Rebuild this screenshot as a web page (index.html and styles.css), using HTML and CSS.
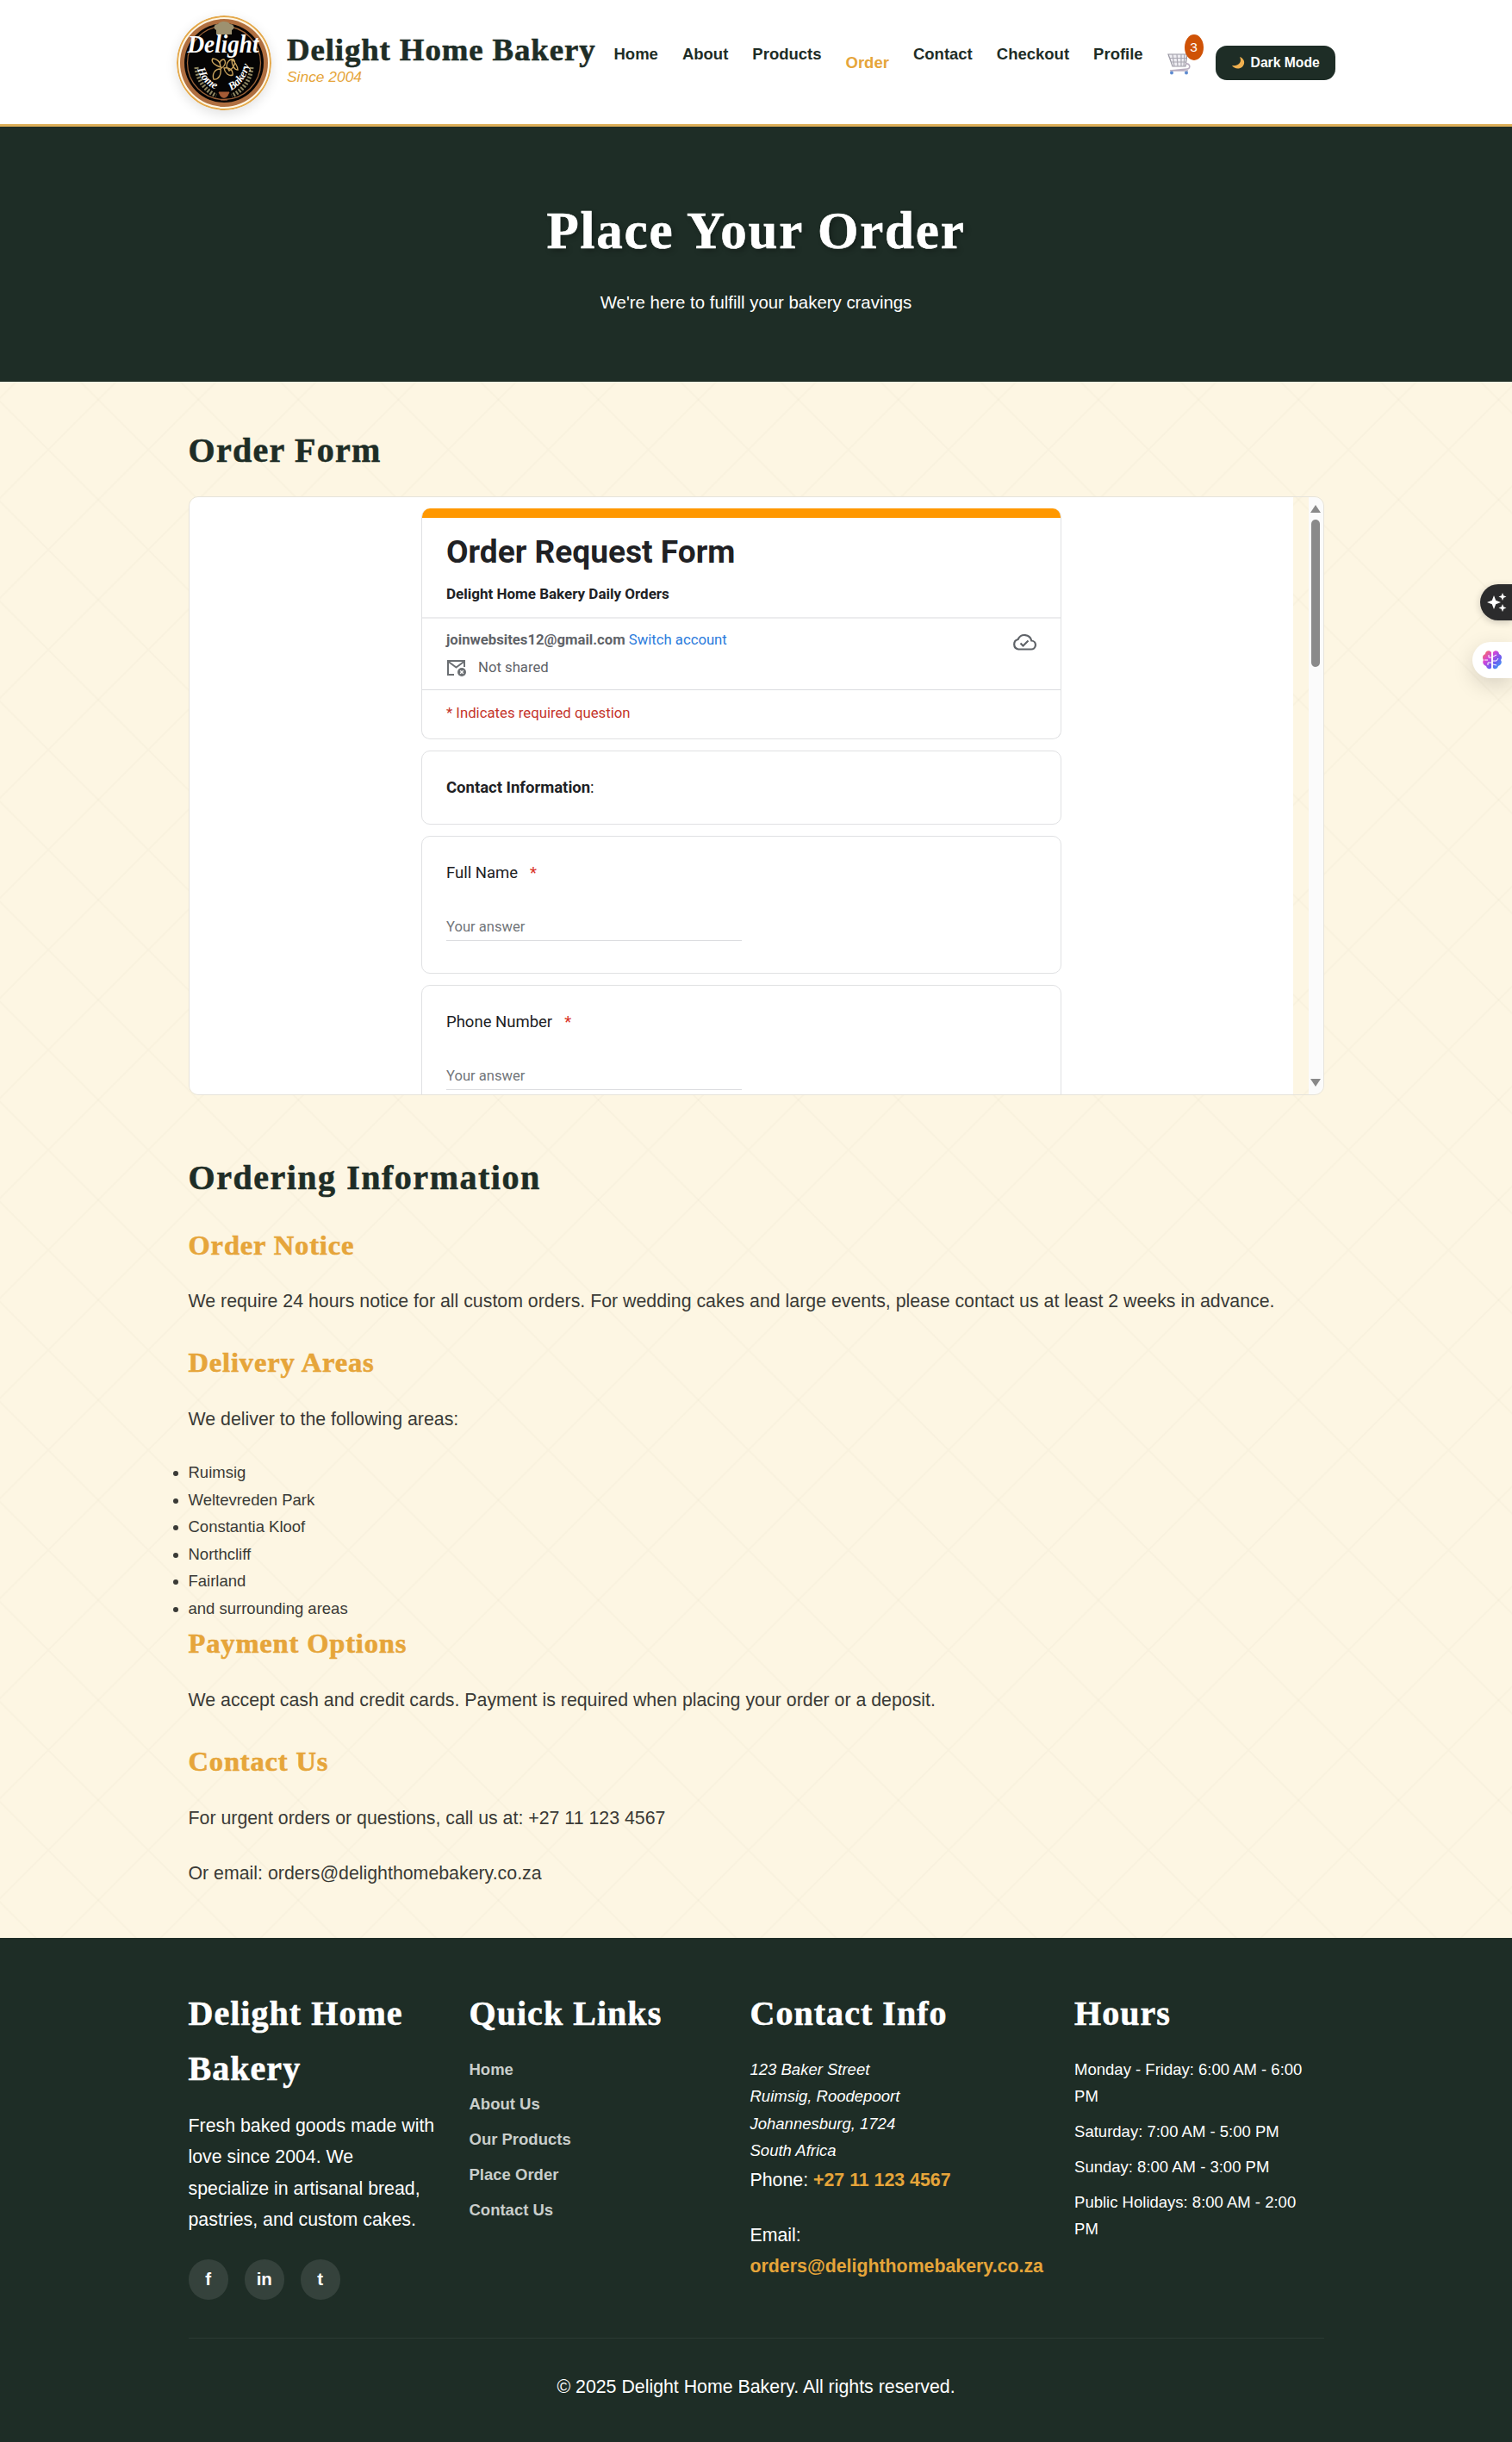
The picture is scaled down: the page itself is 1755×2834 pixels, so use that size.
FILE: index.html
```html
<!DOCTYPE html>
<html lang="en">
<head>
<meta charset="utf-8">
<title>Place Your Order - Delight Home Bakery</title>
<link rel="stylesheet" href="styles.css">
</head>
<body>
<header class="site-header">
  <div class="brand">
    <svg class="logo" viewBox="0 0 110 110" role="img" aria-label="Delight Home Bakery logo">
      <circle cx="55" cy="55" r="54" fill="#fff6e3" stroke="#e4a84a" stroke-width="2"/>
      <circle cx="55" cy="55" r="51" fill="#b06f40"/>
      <circle cx="55" cy="55" r="46" fill="#050404"/>
      <circle cx="55" cy="55" r="42.5" fill="none" stroke="#9a6238" stroke-width="1.3"/>
      <path d="M46 22v-5c-4-2-3-7 2-7 2-4 12-4 14 0 5 0 6 5 2 7v5z" fill="#9d9170"/>
      <g fill="none" stroke="#c9a35c" stroke-width="1.4">
        <path d="M51 60c-6-2-12-6-9-10 4 0 9 3 9 10zM52 61c-3-5-2-10 3-10 3 3 1 8-3 10zM51 62c-7 0-10 6-8 12 6 1 9-6 8-12zM55 61c1 6 6 10 10 8 1-6-4-9-10-8zM58 59c0-5 4-9 8-8 4 4-1 11-5 13zM64 51c3 2 7 8 7 12-4 0-7-5-7-12z"/>
      </g>
      <g fill="none" stroke="#8d8560" stroke-width="5" stroke-dasharray="2 1.8">
        <path d="M23 60C24 75 34 88 46 93"/>
        <path d="M87 60C86 75 76 88 64 93"/>
      </g>
      <path d="M49 89h12l-2 4c-1 3-7 3-8 0zM51 98h8" fill="#a55b35" stroke="#a55b35"/>
      <text class="logo-word" x="54" y="43" text-anchor="middle" textLength="83" lengthAdjust="spacingAndGlyphs">Delight</text>
      <path id="arcL" d="M24 61Q28 79 48 87" fill="none"/>
      <path id="arcR" d="M63 87Q80 79 86 54" fill="none"/>
      <text class="logo-small"><textPath href="#arcL" startOffset="1">Home</textPath></text>
      <text class="logo-small"><textPath href="#arcR">Bakery</textPath></text>
    </svg>
    <div class="brand-text">
      <div class="brand-name">Delight Home Bakery</div>
      <div class="tagline">Since 2004</div>
    </div>
  </div>
  <nav class="nav">
    <a>Home</a><a>About</a><a>Products</a><a class="active">Order</a><a>Contact</a><a>Checkout</a><a>Profile</a>
  </nav>
  <div class="cart">
    <svg viewBox="0 0 28 26" width="28" height="26">
      <path d="M1 2h22l-2 14H6z" fill="#eeedf2" stroke="#9a98a3" stroke-width="1.2"/>
      <path d="M6 2l2 14M11 2l1 14M16 2l0 14M20 2l-1 14M2 6.500h20M4 11h17" stroke="#aaa8b2" stroke-width="1.2" fill="none"/>
      <path d="M21 13c6-1 6 6 2 6l-20 2h21" fill="none" stroke="#b9aec0" stroke-width="1.6"/>
      <circle cx="5" cy="23.500" r="2" fill="#5d8bd0"/><circle cx="22" cy="23.500" r="2" fill="#5d8bd0"/>
    </svg>
    <span class="badge">3</span>
  </div>
  <button class="mode"><svg viewBox="0 0 16 16" width="16" height="16"><path d="M10 1c3 6-1 11-9 10 3 5 12 5 14-2 1-4-2-7-5-8z" fill="#f0b04f"/></svg><span>Dark Mode</span></button>
</header>
<section class="hero">
  <h1>Place Your Order</h1>
  <p>We're here to fulfill your bakery cravings</p>
</section>
<main class="main">
  <h2>Order Form</h2>
  <div class="frame">
    <div class="form-page">
      <div class="card card-top">
        <div class="bar"></div>
        <div class="card-head">
          <div class="form-title">Order Request Form</div>
          <div class="form-desc">Delight Home Bakery Daily Orders</div>
        </div>
        <div class="account">
          <div class="acc-lines">
            <div class="line"><b>joinwebsites12@gmail.com</b> <a class="switch">Switch account</a></div>
            <div class="line shared">
              <svg width="24" height="22" viewBox="0 0 24 22"><path d="M9 19H2V3h19v7M2 3.500l9.500 7L21 3.500" fill="none" stroke="#6b6f73" stroke-width="2"/><circle cx="18" cy="16" r="5" fill="#6b6f73"/><path d="M16.200 14.200l3.600 3.600M19.800 14.200l-3.600 3.600" stroke="#fff" stroke-width="1.300"/></svg>
              <span>Not shared</span>
            </div>
          </div>
          <svg class="cloud" width="28" height="20" viewBox="0 0 28 20"><path d="M7 18.500h14.500a5 5 0 0 0 .8-10A8.300 8.300 0 0 0 6.600 7 5.900 5.900 0 0 0 7 18.500z" fill="none" stroke="#5f6368" stroke-width="2.200"/><path d="M9.500 11.500l3 3 6-6" fill="none" stroke="#5f6368" stroke-width="2.200"/></svg>
        </div>
        <div class="required">* Indicates required question</div>
      </div>
      <div class="card card-info"><b>Contact Information</b>:</div>
      <div class="card question"><div class="q">Full Name<span class="star">*</span></div><div class="answer">Your answer</div></div>
      <div class="card question"><div class="q">Phone Number<span class="star">*</span></div><div class="answer">Your answer</div></div>
    </div>
    <div class="scroll"><i class="up"></i><i class="thumb"></i><i class="down"></i></div>
  </div>
  <h2 class="info-title">Ordering Information</h2>
  <h3>Order Notice</h3>
  <p>We require 24 hours notice for all custom orders. For wedding cakes and large events, please contact us at least 2 weeks in advance.</p>
  <h3>Delivery Areas</h3>
  <p>We deliver to the following areas:</p>
  <ul>
    <li>Ruimsig</li><li>Weltevreden Park</li><li>Constantia Kloof</li><li>Northcliff</li><li>Fairland</li><li>and surrounding areas</li>
  </ul>
  <h3>Payment Options</h3>
  <p>We accept cash and credit cards. Payment is required when placing your order or a deposit.</p>
  <h3>Contact Us</h3>
  <p>For urgent orders or questions, call us at: +27 11 123 4567</p>
  <p>Or email: orders@delighthomebakery.co.za</p>
</main>
<footer class="footer">
  <div class="cols">
    <div>
      <h2>Delight Home Bakery</h2>
      <p>Fresh baked goods made with love since 2004. We specialize in artisanal bread, pastries, and custom cakes.</p>
      <div class="social"><a>f</a><a>in</a><a>t</a></div>
    </div>
    <div>
      <h2>Quick Links</h2>
      <ul class="links"><li>Home</li><li>About Us</li><li>Our Products</li><li>Place Order</li><li>Contact Us</li></ul>
    </div>
    <div>
      <h2>Contact Info</h2>
      <address>123 Baker Street<br>Ruimsig, Roodepoort<br>Johannesburg, 1724<br>South Africa</address>
      <p>Phone: <b>+27 11 123 4567</b></p>
      <p>Email:<br><b>orders@delighthomebakery.co.za</b></p>
    </div>
    <div>
      <h2>Hours</h2>
      <ul class="hours"><li>Monday - Friday: 6:00 AM - 6:00 PM</li><li>Saturday: 7:00 AM - 5:00 PM</li><li>Sunday: 8:00 AM - 3:00 PM</li><li>Public Holidays: 8:00 AM - 2:00 PM</li></ul>
    </div>
  </div>
  <div class="copy">© 2025 Delight Home Bakery. All rights reserved.</div>
</footer>
<div class="side side-dark"><svg width="24" height="24" viewBox="0 0 24 24" fill="#fff"><path d="M8 4l2.200 5.800L16 12l-5.800 2.200L8 20l-2.200-5.800L0 12l5.800-2.200zM18 1l1.300 3.200L22.500 5.500l-3.200 1.300L18 10l-1.300-3.200-3.200-1.300 3.200-1.300zM18 14l1.300 3.200 3.200 1.300-3.200 1.300L18 23l-1.300-3.200-3.200-1.300 3.200-1.300z"/></svg></div>
<div class="side side-light"><svg width="24" height="24" viewBox="0 0 24 24"><defs><linearGradient id="brain" x1="0" y1="0" x2="1" y2="1"><stop offset="0" stop-color="#ff7a45"/><stop offset=".35" stop-color="#d445d8"/><stop offset=".65" stop-color="#6d5cf0"/><stop offset="1" stop-color="#2bb5f5"/></linearGradient></defs><path d="M11 3C9-0 4 1 4 5 1 6 0 9 2 12c-2 3 0 6 3 7 1 4 5 4 6 2zM13 3c2-3 7-2 7 2 3 1 4 4 2 7 2 3 0 6-3 7-1 4-5 4-6 2z" fill="url(#brain)"/><path d="M11 9H8V6M3 12h4M11 15H7v3M13 8l4-2M13 13h4l2-3M13 17l4 1" stroke="#fff" fill="none" stroke-width="1"/></svg></div>
</body>
</html>
```
FILE: styles.css
```css
* { box-sizing: border-box; margin: 0; padding: 0; }
body {
  position: relative;
  min-height: 2834px;
  overflow-x: hidden;
  font-family: "Liberation Sans", Arial, sans-serif;
  color: #3a3a36;
  background-color: #fdf6e3;
  background-image:
    linear-gradient(45deg, transparent 49.4%, rgba(120, 110, 70, .03) 49.6%, rgba(120, 110, 70, .03) 50.4%, transparent 50.6%),
    linear-gradient(-45deg, transparent 49.4%, rgba(120, 110, 70, .03) 49.6%, rgba(120, 110, 70, .03) 50.4%, transparent 50.6%);
  background-size: 116.1px 116.1px;
  background-position: 56px 57.5px;
}
h1, h2, h3, .brand-name {
  font-family: "Liberation Serif", Georgia, serif;
  font-weight: bold;
  -webkit-text-stroke: .6px currentColor;
}
ul { list-style: none; }

.site-header {
  display: flex;
  align-items: flex-start;
  height: 147px;
  padding-left: 205px;
  background: #fff;
  border-bottom: 3px solid #dcae58;
}
.brand { display: flex; width: 507.500px; padding-top: 17.500px; gap: 18px; }
.logo { width: 110px; height: 110px; border-radius: 50%; box-shadow: 0 4px 14px rgba(0, 0, 0, .12); }
.logo-word { font: italic bold 29px "Liberation Serif", serif; fill: #fff; }
.logo-small { font: italic bold 13px "Liberation Serif", serif; fill: #fff; }
.brand-text { padding-top: 15px; white-space: nowrap; }
.brand-name { font-size: 36.800px; line-height: 50px; letter-spacing: .900px; color: #1e2d26; }
.tagline { margin-top: -9px; font-size: 17.400px; line-height: 31px; font-style: italic; color: #e6a53a; }
.nav { display: flex; gap: 28px; padding-top: 47px; font-size: 18.500px; font-weight: bold; line-height: 32px; color: #1e2d26; }
.active { margin-top: 9.500px; color: #e6a53a; }
.cart { position: relative; width: 28px; height: 26px; margin: 61px 0 0 28px; }
.cart svg { display: block; }
.badge { position: absolute; left: 20px; top: -21px; width: 22px; height: 30px; border-radius: 50%; background: #cf5206; color: #fff; font-size: 15.500px; line-height: 29px; text-align: center; }
.mode { display: flex; align-items: center; justify-content: center; gap: 7px; width: 139px; height: 40px; margin: 53px 0 0 28px; border: 0; border-radius: 13px; background: #1e2d26; color: #fff; font: bold 15.700px "Liberation Sans", sans-serif; }

.hero { height: 296px; padding-top: 72px; text-align: center; background: #1e2d26; color: #fff; }
.hero h1 { font-size: 61px; line-height: 98px; letter-spacing: 1.800px; text-shadow: 3px 3px 6px rgba(0, 0, 0, .3); }
.hero p { margin-top: 16px; font-size: 20.400px; line-height: 36.400px; }

.main { width: 1318px; height: 1806px; margin: 0 auto; padding-top: 48px; }
.main h2, .footer h2 { font-size: 40px; line-height: 63.500px; letter-spacing: .032em; color: #1e2d26; }
.frame { display: flex; height: 695px; margin-top: 21px; border: 1px solid #e6e3da; border-radius: 11px; overflow: hidden; }
.form-page { width: 1281px; padding: 13px 0 0 269px; background: #fff; font-family: Roboto, sans-serif; color: #202124; }
.card { width: 743px; margin-bottom: 13px; padding: 0 28.500px; border: 1px solid #e0e1e3; border-radius: 10px; background: #fff; }
.card-top { height: 268px; padding: 0; border-top: 0; overflow: hidden; }
.bar { height: 11px; margin: 0 -1px; background: #ff9800; }
.card-head { height: 117px; padding: 16px 28.500px 0; border-bottom: 2px solid #ececee; }
.form-title { font-size: 37.100px; font-weight: 700; line-height: 48px; }
.form-desc { margin-top: 10px; font-size: 17px; font-weight: 700; line-height: 28px; }
.account { display: flex; justify-content: space-between; height: 83px; padding: 9px 28px 0 28.500px; border-bottom: 1px solid #dadce0; font-size: 16.700px; color: #5f6368; }
.line { line-height: 32px; white-space: pre; }
.shared { display: flex; align-items: center; gap: 13px; }
.account b { font-weight: 700; font-size: 16.700px; }
.switch { color: #2b7bdc; }
.cloud { margin-top: 8px; }
.required { padding: 10px 28.500px; font-size: 16.750px; line-height: 32px; color: #c5352b; }
.card-info { height: 86px; font-size: 18.500px; line-height: 84px; }
.card-info b { font-weight: 700; }
.question { height: 160px; padding-top: 26px; }
.q { font-size: 18.500px; line-height: 32px; }
.star { margin-left: 14px; color: #d93025; }
.answer { width: 343px; height: 35px; margin-top: 28px; border-bottom: 1px solid #dcdde0; font-size: 16.600px; line-height: 37px; color: #72767a; }
.scroll { display: flex; flex-direction: column; align-items: center; width: 17px; margin-left: 18px; padding-top: 9px; background: #fbfbfb; }
.up, .down { border: 6px solid transparent; }
.up { border-top: 0; border-bottom: 9px solid #898989; }
.thumb { width: 10px; height: 171px; margin-top: 8px; border-radius: 5px; background: #8a8a8a; }
.down { margin: auto 0 9px; border-bottom: 0; border-top: 9px solid #898989; }

.main .info-title { margin-top: 64.500px; letter-spacing: .038em; }
h3 { font-size: 32.500px; line-height: 50.800px; letter-spacing: .026em; color: #e6a53a; margin-bottom: 22px; }
.info-title + h3 { margin-top: 21px; }
p { font-size: 21.333px; line-height: 36.400px; margin-bottom: 27.700px; }
.main ul { list-style: disc; font-size: 18.500px; line-height: 31.500px; }

.footer { height: 585px; padding: 56px 218.500px 0; background: #1e2d26; color: #fff; }
.cols { display: grid; grid-template-columns: 1fr 1fr 340px 1fr; column-gap: 36.600px; height: 409px; border-bottom: 1px solid #2b3a33; }
.footer h2 { color: #fff; letter-spacing: .026em; margin-bottom: 17px; }
.social { display: flex; gap: 18.500px; }
.social a { width: 46.500px; height: 46.500px; border-radius: 50%; background: #35423c; font-size: 20.500px; font-weight: bold; line-height: 46px; text-align: center; }
.links, .hours, address { font-size: 18.500px; line-height: 31.500px; }
.links li, .hours li { margin-bottom: 9.400px; }
.links { font-weight: bold; color: #c9cecb; }
.footer b { color: #e6a53a; }
.copy { padding-top: 38px; font-size: 21.333px; line-height: 36.400px; text-align: center; }

.side { position: absolute; right: 0; display: flex; align-items: center; height: 42px; }
.side-dark { top: 678px; width: 37px; padding-left: 8px; border-radius: 21px 0 0 21px; background: #2b2b2c; box-shadow: 0 2px 8px rgba(0, 0, 0, .2); }
.side-light { top: 745px; width: 46px; padding-left: 11px; border-radius: 21px 0 0 21px; background: #fff; box-shadow: 0 8px 24px rgba(0, 0, 0, .15); }
```
